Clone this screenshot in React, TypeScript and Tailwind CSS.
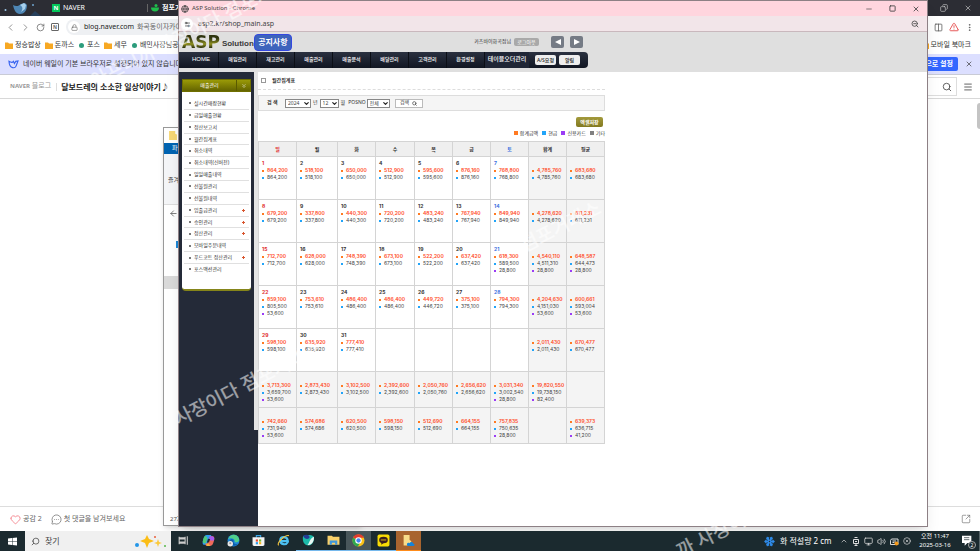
import React from "react";
import {
  ArrowLeft,
  ChevronDown,
  ChevronLeft,
  ChevronRight,
  ChevronUp,
  ChevronsDown,
  CircleX,
  Columns2,
  Copy,
  EllipsisVertical,
  Globe,
  Heart,
  Lock,
  Menu,
  MessageCircleMore,
  Minus,
  Monitor,
  RotateCw,
  Search,
  Settings2,
  Snowflake,
  Square,
  SquareArrowOutUpRight,
  TriangleAlert,
  Volume2,
  X,
  ZoomOut,
} from "lucide-react";

const navItems = ["HOME", "매입관리", "재고관리", "매출관리", "매출분석", "배달관리", "고객관리", "환경설정"];

const sideItems: { label: string; more?: boolean }[] = [
  { label: "실시간매장현황" },
  { label: "금일매출현황" },
  { label: "정산보고서" },
  { label: "월간집계표" },
  { label: "취소내역" },
  { label: "취소내역(신버전)" },
  { label: "일일매출내역" },
  { label: "선불원관리" },
  { label: "선불원내역" },
  { label: "입출금관리", more: true },
  { label: "승인관리", more: true },
  { label: "정산관리", more: true },
  { label: "모바일주문내역" },
  { label: "푸드코트 정산관리", more: true },
  { label: "포스액션관리" },
];

type Cell = { day?: number; values: string[] };

const c = (day: number | undefined, ...values: string[]): Cell => ({ day, values });

const weeks: Cell[][] = [
  [
    c(1, "864,200", "864,200"),
    c(2, "518,100", "518,100"),
    c(3, "650,000", "650,000"),
    c(4, "512,900", "512,900"),
    c(5, "595,600", "595,600"),
    c(6, "876,160", "876,160"),
    c(7, "768,800", "768,800"),
    c(undefined, "4,785,760", "4,785,760"),
    c(undefined, "683,680", "683,680"),
  ],
  [
    c(8, "679,200", "679,200"),
    c(9, "337,800", "337,800"),
    c(10, "440,300", "440,300"),
    c(11, "720,200", "720,200"),
    c(12, "483,240", "483,240"),
    c(13, "767,940", "767,940"),
    c(14, "849,940", "849,940"),
    c(undefined, "4,278,620", "4,278,620"),
    c(undefined, "611,231", "611,231"),
  ],
  [
    c(15, "712,700", "712,700"),
    c(16, "628,000", "628,000"),
    c(17, "748,390", "748,390"),
    c(18, "673,100", "673,100"),
    c(19, "522,200", "522,200"),
    c(20, "637,420", "637,420"),
    c(21, "618,300", "589,500", "28,800"),
    c(undefined, "4,540,110", "4,511,310", "28,800"),
    c(undefined, "648,587", "644,473", "28,800"),
  ],
  [
    c(22, "859,100", "805,500", "53,600"),
    c(23, "753,610", "753,610"),
    c(24, "486,400", "486,400"),
    c(25, "486,400", "486,400"),
    c(26, "449,720", "446,720"),
    c(27, "375,100", "375,100"),
    c(28, "794,300", "794,300"),
    c(undefined, "4,204,630", "4,151,030", "53,600"),
    c(undefined, "600,661", "593,004", "53,600"),
  ],
  [
    c(29, "598,100", "598,100"),
    c(30, "635,920", "635,920"),
    c(31, "777,410", "777,410"),
    c(undefined),
    c(undefined),
    c(undefined),
    c(undefined),
    c(undefined, "2,011,430", "2,011,430"),
    c(undefined, "670,477", "670,477"),
  ],
];

const totals: Cell[][] = [
  [
    c(undefined, "3,713,300", "3,659,700", "53,600"),
    c(undefined, "2,873,430", "2,873,430"),
    c(undefined, "3,102,500", "3,102,500"),
    c(undefined, "2,392,600", "2,392,600"),
    c(undefined, "2,050,760", "2,050,760"),
    c(undefined, "2,656,620", "2,656,620"),
    c(undefined, "3,031,340", "3,002,540", "28,800"),
    c(undefined, "19,820,550", "19,738,150", "82,400"),
    c(undefined),
  ],
  [
    c(undefined, "742,660", "731,940", "53,600"),
    c(undefined, "574,686", "574,686"),
    c(undefined, "620,500", "620,500"),
    c(undefined, "598,150", "598,150"),
    c(undefined, "512,690", "512,690"),
    c(undefined, "664,155", "664,155"),
    c(undefined, "757,835", "750,635", "28,800"),
    c(undefined),
    c(undefined, "639,373", "636,715", "41,200"),
  ],
];

const dotColors = ["bg-[#ff7a22]", "bg-[#22a4f8]", "bg-[#9b3cf5]"];

function CellBody({ cell, column }: { cell: Cell; column: number }) {
  const dayColor = column === 0 ? "text-[#e02828]" : column === 6 ? "text-[#3a6fe0]" : "text-[#333]";
  return (
    <div className="pt-[2px] pl-[3px] font-[Inter,'Noto_Sans_CJK_KR',sans-serif]">
      <div className={`h-2 text-[5px] leading-[8px] font-bold ${dayColor}`}>{cell.day}</div>
      {cell.values.map((value, i) => (
        <div key={i} className="flex h-[7px] items-center gap-[3px]">
          <span className={`size-[2px] shrink-0 ${dotColors[i]}`} />
          <span className={`text-[5px] leading-[7px] ${i === 0 ? "font-semibold text-[#ff4a26]" : "text-[#444]"}`}>{value}</span>
        </div>
      ))}
    </div>
  );
}

function FolderIcon() {
  return (
    <svg viewBox="0 0 16 14" className="h-[7px] w-2 shrink-0">
      <path d="M0 1h6l2 2h8v11H0z" fill="#f7a823" />
    </svg>
  );
}

function BookmarkLink({ label, kind }: { label: string; kind: "folder" | "dot" }) {
  return (
    <a href="#" className="flex items-center gap-[2px] whitespace-nowrap">
      {kind === "folder" ? <FolderIcon /> : <span className="mx-px size-[5px] shrink-0 rounded-full bg-[#2c9c7c]" />}
      {label}
    </a>
  );
}

function BlogWindow() {
  return (
    <section className="absolute inset-0 flex flex-col overflow-hidden bg-white text-[7px] text-[#222]">
      <div className="flex h-4 shrink-0 items-center bg-[#2c2d34] text-white">
        <svg viewBox="0 0 44 16" className="h-4 w-11">
          <circle cx="5.500" cy="10" r="1" fill="#9fc7e6" />
          <path d="M13 5c3 2 6 1 8-1l4-1 2 2c0 6-3 9-7 9-4 0-6-4-7-9z" fill="#4e86b4" />
          <path d="M20 5l4-2 2 2-1 4-4 3c2-3 2-5-1-7z" fill="#a8d0ec" />
          <circle cx="33" cy="5" r="1" fill="#6ea3cc" />
          <path d="M30 16l5-5 6 5z" fill="#263f5b" />
        </svg>
        <span className="ml-2 grid size-2 place-items-center bg-[#03c75a] text-[6px] font-bold">N</span>
        <span className="ml-[3px] w-[84px]">NAVER</span>
        <span className="h-2 w-px bg-[#666]" />
        <svg viewBox="0 0 16 16" className="ml-[3px] size-2">
          <path d="M0 7h16c0 5-3 8-8 8S0 12 0 7z" fill="#1fbf4c" />
          <circle cx="10" cy="3" r="3" fill="#1fbf4c" />
        </svg>
        <span className="ml-[3px] font-bold">점포거래소</span>
        <span className="ml-auto flex items-center gap-4 pr-[8px] text-[#c8c8c8]">
          <button aria-label="이전 크기로"><Copy size={8} className="-scale-x-100" /></button>
          <button aria-label="창 닫기"><X size={8} /></button>
        </span>
      </div>

      <div className="flex h-[21px] shrink-0 items-center justify-between pt-px">
        <div className="flex items-center text-[#666]">
          <button aria-label="뒤로" className="ml-[5px]"><ChevronLeft size={11} strokeWidth={1.5} /></button>
          <button aria-label="앞으로" className="ml-[4px]"><ChevronRight size={11} strokeWidth={1.5} /></button>
          <button aria-label="새로고침" className="ml-[5px]"><RotateCw size={9} /></button>
          <span className="ml-[6px] grid size-2 place-items-center rounded-[1px] border border-[#666] text-[5px] leading-none font-bold">N</span>
          <div className="ml-[7px] flex h-4 w-[200px] items-center rounded-full bg-[#eef0f3]">
            <span className="ml-[2px] grid size-3 place-items-center rounded-full bg-white"><Lock size={7} /></span>
            <span className="ml-[4px] whitespace-nowrap text-[#222]">
              blog.naver.com <span className="ml-px text-[#666]">화곡동이자카야</span>
            </span>
          </div>
        </div>
        <div className="flex items-center gap-[6px] pr-[6px] text-[#555]">
          <Columns2 size={9} />
          <TriangleAlert size={10} className="text-[#e23b3b]" />
          <EllipsisVertical size={9} />
        </div>
      </div>

      <nav className="flex h-[17px] shrink-0 items-center justify-between pb-px pl-[5px] text-[#333]">
        <div className="flex items-center gap-[4px]">
          <BookmarkLink kind="folder" label="정승밥상" />
          <BookmarkLink kind="folder" label="돈까스" />
          <BookmarkLink kind="dot" label="포스" />
          <BookmarkLink kind="folder" label="세무" />
          <BookmarkLink kind="dot" label="배민사장님공지" />
        </div>
        <div className="pr-[9px]"><BookmarkLink kind="folder" label="모바일 북마크" /></div>
      </nav>

      <div className="flex h-[21px] shrink-0 items-center justify-between border-b border-[#c9cbd6] bg-[#dcdfff] text-[#333]">
        <div className="flex items-center pl-[8px]">
          <svg viewBox="0 0 24 20" className="h-[9px] w-[11px]" fill="none" stroke="#3764f0" strokeWidth="2.500">
            <path d="M2 3c5 3 8 3 10 0l2 5 3-5 5-1-3 8c-2 10-16 11-17-7z" />
          </svg>
          <span className="ml-[4px] whitespace-nowrap">네이버 웨일이 기본 브라우저로 설정되어 있지 않습니다.</span>
        </div>
        <div className="flex items-center gap-[7px] pr-[7px]">
          <button className="h-[14px] rounded-xs bg-[#3366ff] px-[5px] font-bold text-white">기본으로 설정</button>
          <button aria-label="알림 닫기"><X size={8} /></button>
        </div>
      </div>

      <header className="flex h-[24px] shrink-0 items-center justify-between border-b border-[#d8d8d8]">
        <div className="flex items-center pl-[10px]">
          <span className="text-[#999]"><b className="text-[6px]">NAVER</b> 블로그</span>
          <span className="mr-[4px] ml-[5px] h-2 w-px bg-[#ddd]" />
          <h1 className="text-[8px] font-bold whitespace-nowrap">달보드레의 소소한 일상이야기♪</h1>
        </div>
        <div className="flex items-center gap-[6px] pr-[7px] text-[#444]">
          <span className="flex h-[19px] w-[60px] items-center justify-end border border-[#ddd] pr-[4px]"><Search size={10} /></span>
          <Menu size={10} />
        </div>
      </header>

      <div className="flex flex-1 justify-end">
        <span className="mt-[4px] h-[26px] w-[3px] rounded-l bg-[#c4c4c4]" />
      </div>

      <footer className="flex h-[25px] shrink-0 items-center border-t border-[#ddd] pl-[10px] text-[#666]">
        <Heart size={11} strokeWidth={1.5} className="text-[#f0606c]" />
        <span className="ml-[2px]">공감 2</span>
        <MessageCircleMore size={11} strokeWidth={1.5} className="ml-[9px]" />
        <span className="ml-[2px]">첫 댓글을 남겨보세요</span>
        <SquareArrowOutUpRight size={10} strokeWidth={1.5} className="mr-[9px] ml-auto" />
      </footer>
    </section>
  );
}

function ExplorerWindow() {
  return (
    <section className="absolute top-[127px] bottom-[5px] left-[163px] flex w-[200px] flex-col border border-[#999] bg-white text-[6px] shadow-md">
      <div className="flex h-[15px] items-center pl-[5px]">
        <svg viewBox="0 0 14 16" className="h-[9px] w-2"><path d="M0 0h11v5l3 1v10H0z" fill="#f7d774" /></svg>
      </div>
      <div className="h-[11px] bg-[#0063b1] pl-[8px] leading-[11px] text-white">파일</div>
      <div className="h-[51px] border-b border-[#ddd] bg-[#f4f5f7] pt-[22px] pl-[4px] text-[#444]">즐겨찾기</div>
      <div className="h-[36px] pt-[4px] pl-[5px] text-[#555]"><ArrowLeft size={9} /></div>
      <div className="ml-[12px] h-[7px] w-3 bg-[#1b87d6]" />
      <div className="mt-[28px] h-[13px] bg-[#d9d9d9]" />
      <div className="mt-auto pb-px pl-[6px] text-[#555]">27개</div>
    </section>
  );
}

function SmallSelect({ id, label, value, width }: { id: string; label: string; value: string; width: string }) {
  return (
    <span className={`relative flex h-[9px] ${width}`}>
      <select
        id={id}
        aria-label={label}
        defaultValue={value}
        className="h-full w-full appearance-none border border-[#888] bg-white pl-[2px] text-[5px] leading-[7px] text-[#444]"
      >
        <option>{value}</option>
      </select>
      <ChevronDown size={7} strokeWidth={4} className="pointer-events-none absolute top-px right-px text-[#222]" />
    </span>
  );
}

function ShopHeader() {
  return (
    <header className="h-10 shrink-0 bg-[#dfdfdf]">
      <div className="flex h-5 w-[409px] items-center">
        <span className="ml-[3px] bg-linear-to-b from-[#2f3510] from-30% via-[#8f9020] via-60% to-[#2c310f] to-80% bg-clip-text font-['DejaVu_Sans',sans-serif] text-[17px] leading-[20px] font-bold text-transparent">
          ASP
        </span>
        <span className="ml-[2px] pt-[4px] font-['Liberation_Sans',sans-serif] text-[8px] font-bold text-[#3a3a3a]">Solution</span>
        <span className="grid h-[17px] w-[38px] place-items-center rounded-sm border border-[#3448e0] bg-[#3d64bc] text-[8px] leading-none font-bold text-white">
          공지사항
        </span>
        <span className="ml-auto text-[5px] text-[#333]">카츠바이화곡점님</span>
        <button className="ml-[3px] h-2 w-[25px] rounded-xs bg-[#a9a9a9] text-[5px] leading-[8px] text-white">로그아웃</button>
        <button aria-label="이전" className="ml-[12px] grid h-3 w-[13px] place-items-center rounded-xs bg-[#757b85] text-white">
          <svg viewBox="0 0 6 6" className="size-[6px]"><path d="M6 0v6L0 3z" fill="currentColor" /></svg>
        </button>
        <button aria-label="다음" className="mr-[5px] ml-[6px] grid h-3 w-[13px] place-items-center rounded-xs bg-[#757b85] text-white">
          <svg viewBox="0 0 6 6" className="size-[6px]"><path d="M0 0v6l6-3z" fill="currentColor" /></svg>
        </button>
      </div>
      <nav className="flex h-4 w-[409px] items-center rounded-r-sm bg-linear-to-b from-[#2b3140] to-[#111622] text-[5px] font-medium text-white">
        {navItems.map((item) => (
          <a key={item} href="#" className="h-4 w-[38px] shrink-0 border-r border-[#0b0e15] text-center leading-[15px] first:w-[40px] first:pl-[5px] first:font-['Liberation_Sans',sans-serif] first:text-[6px]">
            {item}
          </a>
        ))}
        <a href="#" className="h-4 w-[44px] shrink-0 bg-[#202636] text-center text-[6px] leading-[15px] whitespace-nowrap">테이블오더관리</a>
        <button className="ml-[6px] h-[10px] w-[21px] rounded-xs bg-[#eee] text-[5px] leading-[10px] text-[#222]">A/S요청</button>
        <button className="ml-[3px] h-[10px] w-[21px] rounded-xs bg-[#eee] text-[5px] leading-[10px] text-[#222]">알림</button>
      </nav>
    </header>
  );
}

function SideMenu() {
  return (
    <aside className="w-[75px] shrink-0 bg-[#242a38] pt-[7px] pl-[3px]">
      <div className="w-[69px] rounded-b-sm border-b-2 border-[#85851a] bg-white">
        <div className="flex h-[13px] items-center border border-[#6f6f00] bg-linear-to-b from-[#9a9a08] to-[#646400] text-[5px] text-white">
          <span className="flex-1 text-center">매출관리</span>
          <span className="grid h-full w-[14px] place-items-center border-l border-[#5a5a00]"><ChevronsDown size={6} /></span>
        </div>
        <ul className="mx-[2px] flex h-[197px] flex-col pt-[6px] pb-[14px] text-[5px] text-[#333]">
          {sideItems.map((item) => (
            <li key={item.label} className="flex flex-1 items-center border-b border-[#e0e0e0] pr-[4px] pl-[5px] last:border-b-0">
              <span className="mr-[3px] size-[2px] shrink-0 bg-[#777]" />
              <a href="#" className="flex-1 leading-none whitespace-nowrap">{item.label}</a>
              {item.more && (
                <span className="relative size-[3px] shrink-0">
                  <span className="absolute top-px left-0 h-px w-[3px] bg-[#d8542c]" />
                  <span className="absolute top-0 left-px h-[3px] w-px bg-[#d8542c]" />
                </span>
              )}
            </li>
          ))}
        </ul>
      </div>
    </aside>
  );
}

const legend = [
  { label: "합계금액", color: "bg-[#ff7a22]" },
  { label: "현금", color: "bg-[#22a4f8]" },
  { label: "신용카드", color: "bg-[#9b3cf5]" },
  { label: "기타", color: "bg-[#808080]" },
];

function Report() {
  const heads = ["일", "월", "화", "수", "목", "금", "토", "합계", "평균"];
  return (
    <main className="w-[347px] shrink-0 text-[5px] text-[#333]">
      <div className="flex h-[18px] items-center border-b border-dashed border-[#ddd] pl-[3px]">
        <input id="report" type="checkbox" className="size-[5px] appearance-none border border-[#999] bg-white" />
        <label htmlFor="report" className="ml-[6px] font-bold">월간집계표</label>
      </div>
      <div className="mt-[5px] flex h-4 items-center border border-[#ddd] bg-[#f5f5f5] pl-[8px]">
        <b className="w-[18px]">검 색</b>
        <SmallSelect id="year" label="년" value="2024" width="w-[26px]" />
        <span className="mx-[2px]">년</span>
        <SmallSelect id="month" label="월" value="12" width="w-[19px]" />
        <span className="ml-[2px]">월</span>
        <label htmlFor="pos" className="mr-px ml-[3px]">POSNO</label>
        <SmallSelect id="pos" label="POSNO" value="전체" width="w-[23px]" />
        <button className="ml-[5px] flex h-[9px] w-[28px] items-center justify-center gap-[3px] border border-[#bbb] bg-white">
          검색 <Search size={5} strokeWidth={3} />
        </button>
      </div>
      <div className="flex h-[30px] flex-col items-end pt-[6px]">
        <button className="mr-[2px] h-[10px] w-[27px] rounded-xs bg-linear-to-b from-[#a39a3c] to-[#82791f] leading-[10px] font-bold text-white">엑셀저장</button>
        <div className="mt-[2px] flex gap-[4px] leading-[8px]">
          {legend.map((item) => (
            <span key={item.label} className="flex items-center gap-[2px]">
              <span className={`size-[4px] ${item.color}`} />
              {item.label}
            </span>
          ))}
        </div>
      </div>
      <table className="w-full table-fixed border-collapse">
        <colgroup>
          <col className="w-[38px]" />
          <col className="w-[41px]" />
          <col className="w-[38px]" />
          <col className="w-[39px]" />
          <col className="w-[38px]" />
          <col className="w-[38px]" />
          <col className="w-[38px]" />
          <col className="w-[38px]" />
          <col className="w-[38px]" />
        </colgroup>
        <thead>
          <tr className="h-[15px] bg-[#efefef]">
            {heads.map((head, i) => (
              <th
                key={head}
                scope="col"
                className={`border border-[#d4d4d4] p-0 leading-[13px] font-bold ${i === 0 ? "text-[#e02828]" : i === 6 ? "text-[#3a6fe0]" : ""}`}
              >
                {head}
              </th>
            ))}
          </tr>
        </thead>
        <tbody>
          {weeks.map((week, r) => (
            <tr key={r} className="h-[43px]">
              {week.map((cell, i) => (
                <td key={i} className={`border border-[#d4d4d4] p-0 align-top ${i > 6 ? "bg-[#f4f4f4]" : ""}`}>
                  <CellBody cell={cell} column={i} />
                </td>
              ))}
            </tr>
          ))}
          {totals.map((row, r) => (
            <tr key={r} className="h-[36px] bg-[#f4f4f4]">
              {row.map((cell, i) => (
                <td key={i} className="border border-[#d4d4d4] p-0 align-top">
                  <CellBody cell={cell} column={i} />
                </td>
              ))}
            </tr>
          ))}
        </tbody>
      </table>
    </main>
  );
}

function ShopWindow() {
  return (
    <section className="absolute top-0 right-[52px] bottom-[4px] left-[178px] flex flex-col overflow-hidden border border-[#8d8085] bg-white shadow-lg">
      <div className="flex h-[15px] shrink-0 items-center bg-[#ffd5de] text-[#444]">
        <Globe size={8} strokeWidth={2.5} className="ml-[2px]" />
        <span className="ml-[3px] text-[6px]">ASP Solution - Chrome</span>
        <span className="ml-auto flex gap-4 pr-[7px]">
          <button aria-label="최소화"><Minus size={8} /></button>
          <button aria-label="최대화"><Square size={7} strokeWidth={3} /></button>
          <button aria-label="닫기"><X size={8} strokeWidth={2.5} /></button>
        </span>
      </div>
      <div className="flex h-4 shrink-0 items-center border-b border-[#c9b8bd] bg-[#f2e5e9] pt-px text-[#444]">
        <span className="ml-[2px] grid size-3 place-items-center rounded-full bg-white"><Settings2 size={7} strokeWidth={2.5} /></span>
        <span className="ml-[5px] text-[7px]">asp2.kr/shop_main.asp</span>
        <ZoomOut size={8} strokeWidth={2.5} className="mr-[8px] ml-auto" />
      </div>
      <ShopHeader />
      <div className="flex flex-1 overflow-hidden">
        <SideMenu />
        <div className="w-[4px] shrink-0 bg-[#242a38]">
          <div className="h-[358px] bg-[#e4e4e4]" />
        </div>
        <Report />
      </div>
    </section>
  );
}

function TaskIcon({ name, children, className = "" }: { name: string; children: React.ReactNode; className?: string }) {
  return (
    <button aria-label={name} className={`grid h-full w-[25px] shrink-0 place-items-center border-b ${className}`}>
      <svg viewBox="0 0 24 24" className="size-[13px]">{children}</svg>
    </button>
  );
}

function Taskbar() {
  return (
    <footer className="flex h-5 shrink-0 items-center bg-[#1b2a2f] text-[7px] text-white">
      <button aria-label="시작" className="grid h-full w-[25px] place-items-center">
        <svg viewBox="0 0 18 18" className="size-[9px]">
          <path d="M0 3l8-1v6H0zM9 2l9-1v7H9zM0 9h8v7l-8-1zM9 9h9v8l-9-1z" fill="#fff" />
        </svg>
      </button>
      <label className="flex h-full w-[146px] items-center bg-[#f0f0f0] text-[#444]">
        <Search size={9} className="ml-[6px] -scale-x-100" />
        <input aria-label="찾기" placeholder="찾기" className="ml-[5px] w-[60px] bg-transparent text-[8px] placeholder:text-[#444]" />
        <svg viewBox="0 0 34 16" className="mr-[4px] ml-auto h-4 w-[34px]">
          <path d="M14 2l2 4 5 2-5 2-2 5-2-5-5-2 5-2z" fill="#fbbd16" />
          <path d="M25 6l1 3 3 1-3 1-1 3-1-3-3-1 3-1z" fill="#fbc93c" />
          <circle cx="4" cy="12" r="2" fill="#2496e8" />
          <circle cx="22" cy="4" r="1" fill="#e8603c" />
          <circle cx="32" cy="13" r="1" fill="#58b848" />
        </svg>
      </label>
      <TaskIcon name="작업 보기" className="border-transparent">
        <path d="M4 5v2h11V5M4 19v-2h11v2M4 9h11v6H4zM19 4v16" fill="none" stroke="#ccc" strokeWidth="2" />
      </TaskIcon>
      <TaskIcon name="Copilot" className="border-transparent">
        <path d="M9 2h6c2 0 2 1 3 4l-5 1-4 13H5c-5 0-4-5-3-9C4 5 5 2 9 2z" fill="#2f9df0" />
        <path d="M2 11c1-4 2-7 5-8l3 5-3 9H4c-3-1-3-3-2-6z" fill="#52c878" />
        <path d="M15 22H9c-2 0-2-1-3-4l5-1 4-13h4c5 0 4 5 3 9-2 6-3 9-7 9z" fill="#ef6a5a" />
        <path d="M14 4h5c4 1 4 5 3 8h-6l-3-2z" fill="#a45cf0" />
        <path d="M8 18l4-1 3 5H9z" fill="#f7b03c" />
        <path d="M11 9h4l-2 6H9z" fill="#1b2a2f" />
      </TaskIcon>
      <TaskIcon name="Edge" className="border-transparent">
        <circle cx="12" cy="12" r="11" fill="#1c86d8" />
        <path d="M2 9C5 0 18-2 22 8c2 6-3 8-8 7 2-5-5-9-12-6z" fill="#4fd08a" />
        <path d="M5 12c3-4 8-2 7 1-1 5 4 7 8 5-3 5-15 6-15-6z" fill="#0c5ca8" />
        <circle cx="6" cy="18" r="5" fill="#e7e7e7" />
        <circle cx="6" cy="17" r="2" fill="#999" />
      </TaskIcon>
      <TaskIcon name="스토어" className="border-transparent">
        <path d="M8 7V3h8v4" fill="none" stroke="#39a7e8" strokeWidth="2" />
        <path d="M1 6h22v13c0 2-1 3-3 3H4c-2 0-3-1-3-3z" fill="#f4f4f4" />
        <path d="M7 10h4v4H7z" fill="#e9492d" />
        <path d="M13 10h4v4h-4z" fill="#7ab82d" />
        <path d="M7 15h4v4H7z" fill="#2a9de8" />
        <path d="M13 15h4v4h-4z" fill="#f7b51b" />
      </TaskIcon>
      <TaskIcon name="Internet Explorer" className="border-transparent">
        <path d="M20 15c-3 6-14 5-14-3s13-9 14 1H7" fill="none" stroke="#4cc0f2" strokeWidth="4" />
        <path d="M3 21C-1 16 15 1 22 3" fill="none" stroke="#f6c63c" strokeWidth="2" />
      </TaskIcon>
      <TaskIcon name="웨일" className="border-[#76b9ed]">
        <path d="M2 4c5-3 15-3 19 0 3 6-1 17-9 17S0 13 2 4z" fill="#1bb9a8" />
        <path d="M2 3c6-3 12-2 12 3-1 4-9 5-12-3z" fill="#243b94" />
        <path d="M22 5c1 9-5 17-12 15 4-3 4-12 12-15z" fill="#e8f6f2" />
      </TaskIcon>
      <TaskIcon name="파일 탐색기" className="border-[#76b9ed]">
        <path d="M1 3h8l2 2h12v15H1z" fill="#f8d06a" />
        <path d="M5 12h14v8h-4v-4H9v4H5z" fill="#3f97dc" />
      </TaskIcon>
      <TaskIcon name="Chrome" className="border-[#76b9ed] bg-[#48565a]">
        <circle cx="12" cy="12" r="11" fill="#fbc116" />
        <path d="M12 12L2 7a11 11 0 0 1 20 0H12z" fill="#e33b2e" />
        <path d="M12 12L2 7a11 11 0 0 0 9 16l5-9z" fill="#2da94f" />
        <circle cx="12" cy="12" r="6" fill="#fff" />
        <circle cx="12" cy="12" r="4" fill="#4284f3" />
      </TaskIcon>
      <TaskIcon name="카카오톡" className="border-[#76b9ed]">
        <rect x="1" y="1" width="22" height="22" rx="3" fill="#f9dc05" />
        <ellipse cx="12" cy="11" rx="8" ry="6" fill="#3b1f1e" />
        <path d="M8 15v5l5-4z" fill="#3b1f1e" />
        <path d="M7 11h10" stroke="#c8a414" strokeWidth="2" />
      </TaskIcon>
      <TaskIcon name="OneDrive" className="border-[#ff8c1a] bg-[#a8642f]">
        <path d="M3 2h11v9l3 2v8H3z" fill="#f8dc8a" />
        <path d="M10 22c-3-5 2-7 4-5 2-4 7-2 7 1 3 0 3 4 0 4z" fill="#1583d8" />
      </TaskIcon>

      <div className="ml-auto flex h-full items-center">
        <Snowflake size={11} strokeWidth={3} className="text-[#2f8bea]" />
        <span className="ml-[5px] w-[60px] text-[8px] whitespace-nowrap">화 적설량 2 cm</span>
        <span className="flex items-center gap-[4px] text-[#ddd]">
          <ChevronUp size={8} />
          <svg viewBox="0 0 16 18" className="h-[9px] w-2" fill="none" stroke="currentColor" strokeWidth="2">
            <path d="M5 1h6M3 5h10v8H3zM6 9h4M5 17h6M8 13v4" />
          </svg>
          <Monitor size={9} />
          <Volume2 size={9} />
          <svg viewBox="0 0 18 18" className="size-[9px]" fill="none" stroke="currentColor" strokeWidth="2">
            <path d="M3 4h13v11H1V7zM5 8h7M5 11h4" />
            <circle cx="13" cy="13" r="4" fill="#f59b1c" stroke="none" />
          </svg>
          <CircleX size={8} />
        </span>
        <time className="ml-[5px] w-[38px] text-center text-[6px] leading-[9px]">오전 11:47<br />2025-03-16</time>
        <span className="relative ml-[8px] mr-[5px]">
          <svg viewBox="0 0 18 18" className="size-[12px]"><path d="M0 1h14v11H8l-4 4v-4H0z" fill="#fff" /><path d="M3 4h8M3 7h8" stroke="#1b2a2f" /></svg>
          <span className="absolute -right-[2px] -bottom-[2px] grid size-2 place-items-center rounded-full border border-[#aaa] bg-[#1b2a2f] text-[5px] leading-none">2</span>
        </span>
        <span className="h-full w-px bg-[#566468]" />
      </div>
    </footer>
  );
}

function Watermark({ text, place }: { text: string; place: string }) {
  return (
    <span
      aria-hidden="true"
      className={`pointer-events-none absolute origin-bottom-left -rotate-27 text-[19px] leading-[19px] font-medium whitespace-nowrap text-white/55 ${place}`}
    >
      {text}
    </span>
  );
}

export default function App() {
  return (
    <div className="relative flex h-screen flex-col overflow-hidden font-['Noto_Sans','Noto_Sans_CJK_KR',sans-serif] leading-normal">
      <div className="relative flex-1 overflow-hidden">
        <BlogWindow />
        <ExplorerWindow />
        <ShopWindow />
      </div>
      <Taskbar />
      <Watermark text="아프니까 사장이다 점포거래소" place="top-[72px] left-[96px]" />
      <Watermark text="사장이다 점포거래소" place="top-[410px] left-[180px]" />
      <Watermark text="점포거래소" place="top-[236px] left-[526px]" />
      <Watermark text="까 사장이다" place="top-[542px] left-[682px]" />
    </div>
  );
}
